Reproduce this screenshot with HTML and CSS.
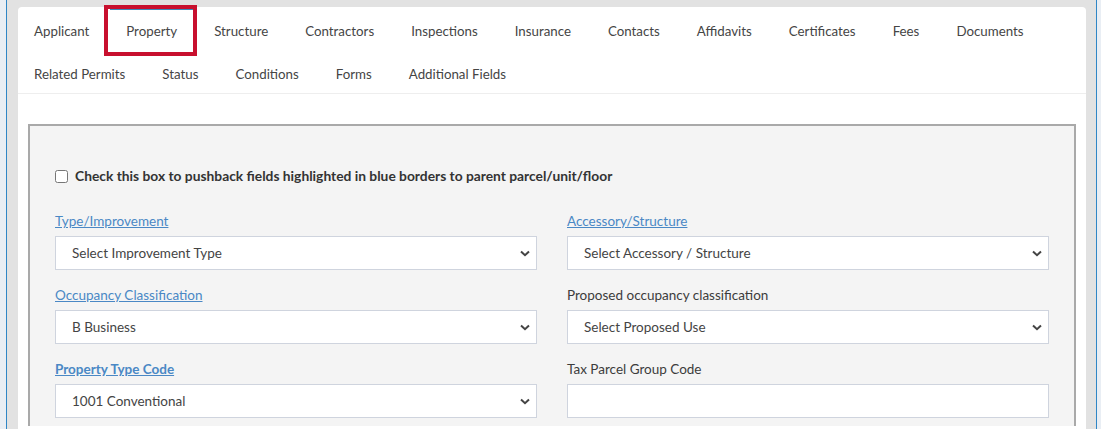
FILE: index.html
```html
<!DOCTYPE html>
<html lang="en">
<head>
  <meta charset="UTF-8">
  <title>Permit - Property</title>
  <link rel="stylesheet" href="styles.css">
</head>
<body>
  <div class="frame">
    <div class="card">
      <ul class="tabs">
        <li>Applicant</li>
        <li class="active">Property<span class="callout"></span></li>
        <li>Structure</li>
        <li>Contractors</li>
        <li>Inspections</li>
        <li>Insurance</li>
        <li>Contacts</li>
        <li>Affidavits</li>
        <li>Certificates</li>
        <li>Fees</li>
        <li>Documents</li>
        <li>Related Permits</li>
        <li>Status</li>
        <li>Conditions</li>
        <li>Forms</li>
        <li>Additional Fields</li>
      </ul>

      <div class="card-body">
        <div class="panel">
          <label class="pushback">
            <input type="checkbox">
            Check this box to pushback fields highlighted in blue borders to parent parcel/unit/floor
          </label>

          <div class="grid">
            <div class="field">
              <a href="#" class="label-link">Type/Improvement</a>
              <select>
                <option>Select Improvement Type</option>
              </select>
            </div>
            <div class="field">
              <a href="#" class="label-link">Accessory/Structure</a>
              <select>
                <option>Select Accessory / Structure</option>
              </select>
            </div>

            <div class="field">
              <a href="#" class="label-link">Occupancy Classification</a>
              <select>
                <option>B Business</option>
              </select>
            </div>
            <div class="field">
              <span class="label">Proposed occupancy classification</span>
              <select>
                <option>Select Proposed Use</option>
              </select>
            </div>

            <div class="field">
              <a href="#" class="label-link strong">Property Type Code</a>
              <select>
                <option>1001 Conventional</option>
              </select>
            </div>
            <div class="field">
              <span class="label">Tax Parcel Group Code</span>
              <input type="text">
            </div>
          </div>
        </div>
      </div>
    </div>
  </div>
</body>
</html>
```

FILE: styles.css
```css
body {
  margin: 0;
  background-color: #e9eef4;
  font-family: Lato, "Liberation Sans", Arial, sans-serif;
  font-size: 13.5px;
  color: #444;
  height: 429px;
  overflow: hidden;
}
.frame {
  margin: 0 4px 0 6px;
  border-left: 1px solid #2f86c6;
  border-right: 1px solid #2f86c6;
  background-color: #e2e2e2;
  padding: 7px 10px 0 11px;
  height: 422px;
}
.card {
  background-color: #fff;
  border-radius: 4px 4px 0 0;
  height: 422px;
}
.tabs {
  list-style: none;
  margin: 0;
  padding: 0;
  display: flex;
  flex-wrap: wrap;
  column-gap: 5px;
  border-bottom: 1px solid #eee;
}
.tabs li {
  position: relative;
  padding: 11px 16px 9px;
  line-height: 20px;
  font-size: 13.3px;
  border-top: 3px solid transparent;
  color: #454545;
  cursor: pointer;
}
.tabs li.active {
  border-top-color: #3b8bbd;
}
.callout {
  position: absolute;
  top: -5px;
  left: -6px;
  right: -4px;
  bottom: -6px;
  border: 4px solid #c8102e;
  pointer-events: none;
}
.card-body {
  padding: 30px 10px 0;
}
.panel {
  background-color: #f4f4f4;
  border: 2px solid #a9a9a9;
  border-bottom: none;
  padding: 40px 25px 0;
  height: 260px;
}
.pushback {
  display: flex;
  align-items: center;
  font-size: 13.8px;
  font-weight: bold;
  color: #333;
  line-height: 20px;
  margin-bottom: 25px;
}
.pushback input {
  margin: 0 7px 0 0;
  width: 13px;
  height: 13px;
}
.grid {
  display: grid;
  grid-template-columns: 1fr 1fr;
  column-gap: 30px;
}
.field {
  display: flex;
  flex-direction: column;
  align-items: flex-start;
  margin-bottom: 15px;
}
.label-link, .label {
  line-height: 20px;
  margin-bottom: 5px;
}
.label-link {
  color: #4a88c5;
  text-decoration: underline;
}
.label-link.strong {
  font-weight: bold;
}
.label {
  color: #3c3c3c;
}
.field select, .field input {
  box-sizing: border-box;
  width: 100%;
  height: 34px;
  margin: 0;
  border: 1px solid #cfd4de;
  border-radius: 0;
  background-color: #fff;
  font-family: inherit;
  font-size: 13.5px;
  color: #444;
  padding: 0 28px 0 16px;
}
.field select {
  -webkit-appearance: none;
  appearance: none;
  background-image: url("data:image/svg+xml;utf8,<svg xmlns='http://www.w3.org/2000/svg' width='10' height='7' viewBox='0 0 10 7'><path d='M1 1.5 L5 5.2 L9 1.5' fill='none' stroke='%23444' stroke-width='2'/></svg>");
  background-repeat: no-repeat;
  background-position: right 6px center;
  background-size: 10px 7px;
}
```
